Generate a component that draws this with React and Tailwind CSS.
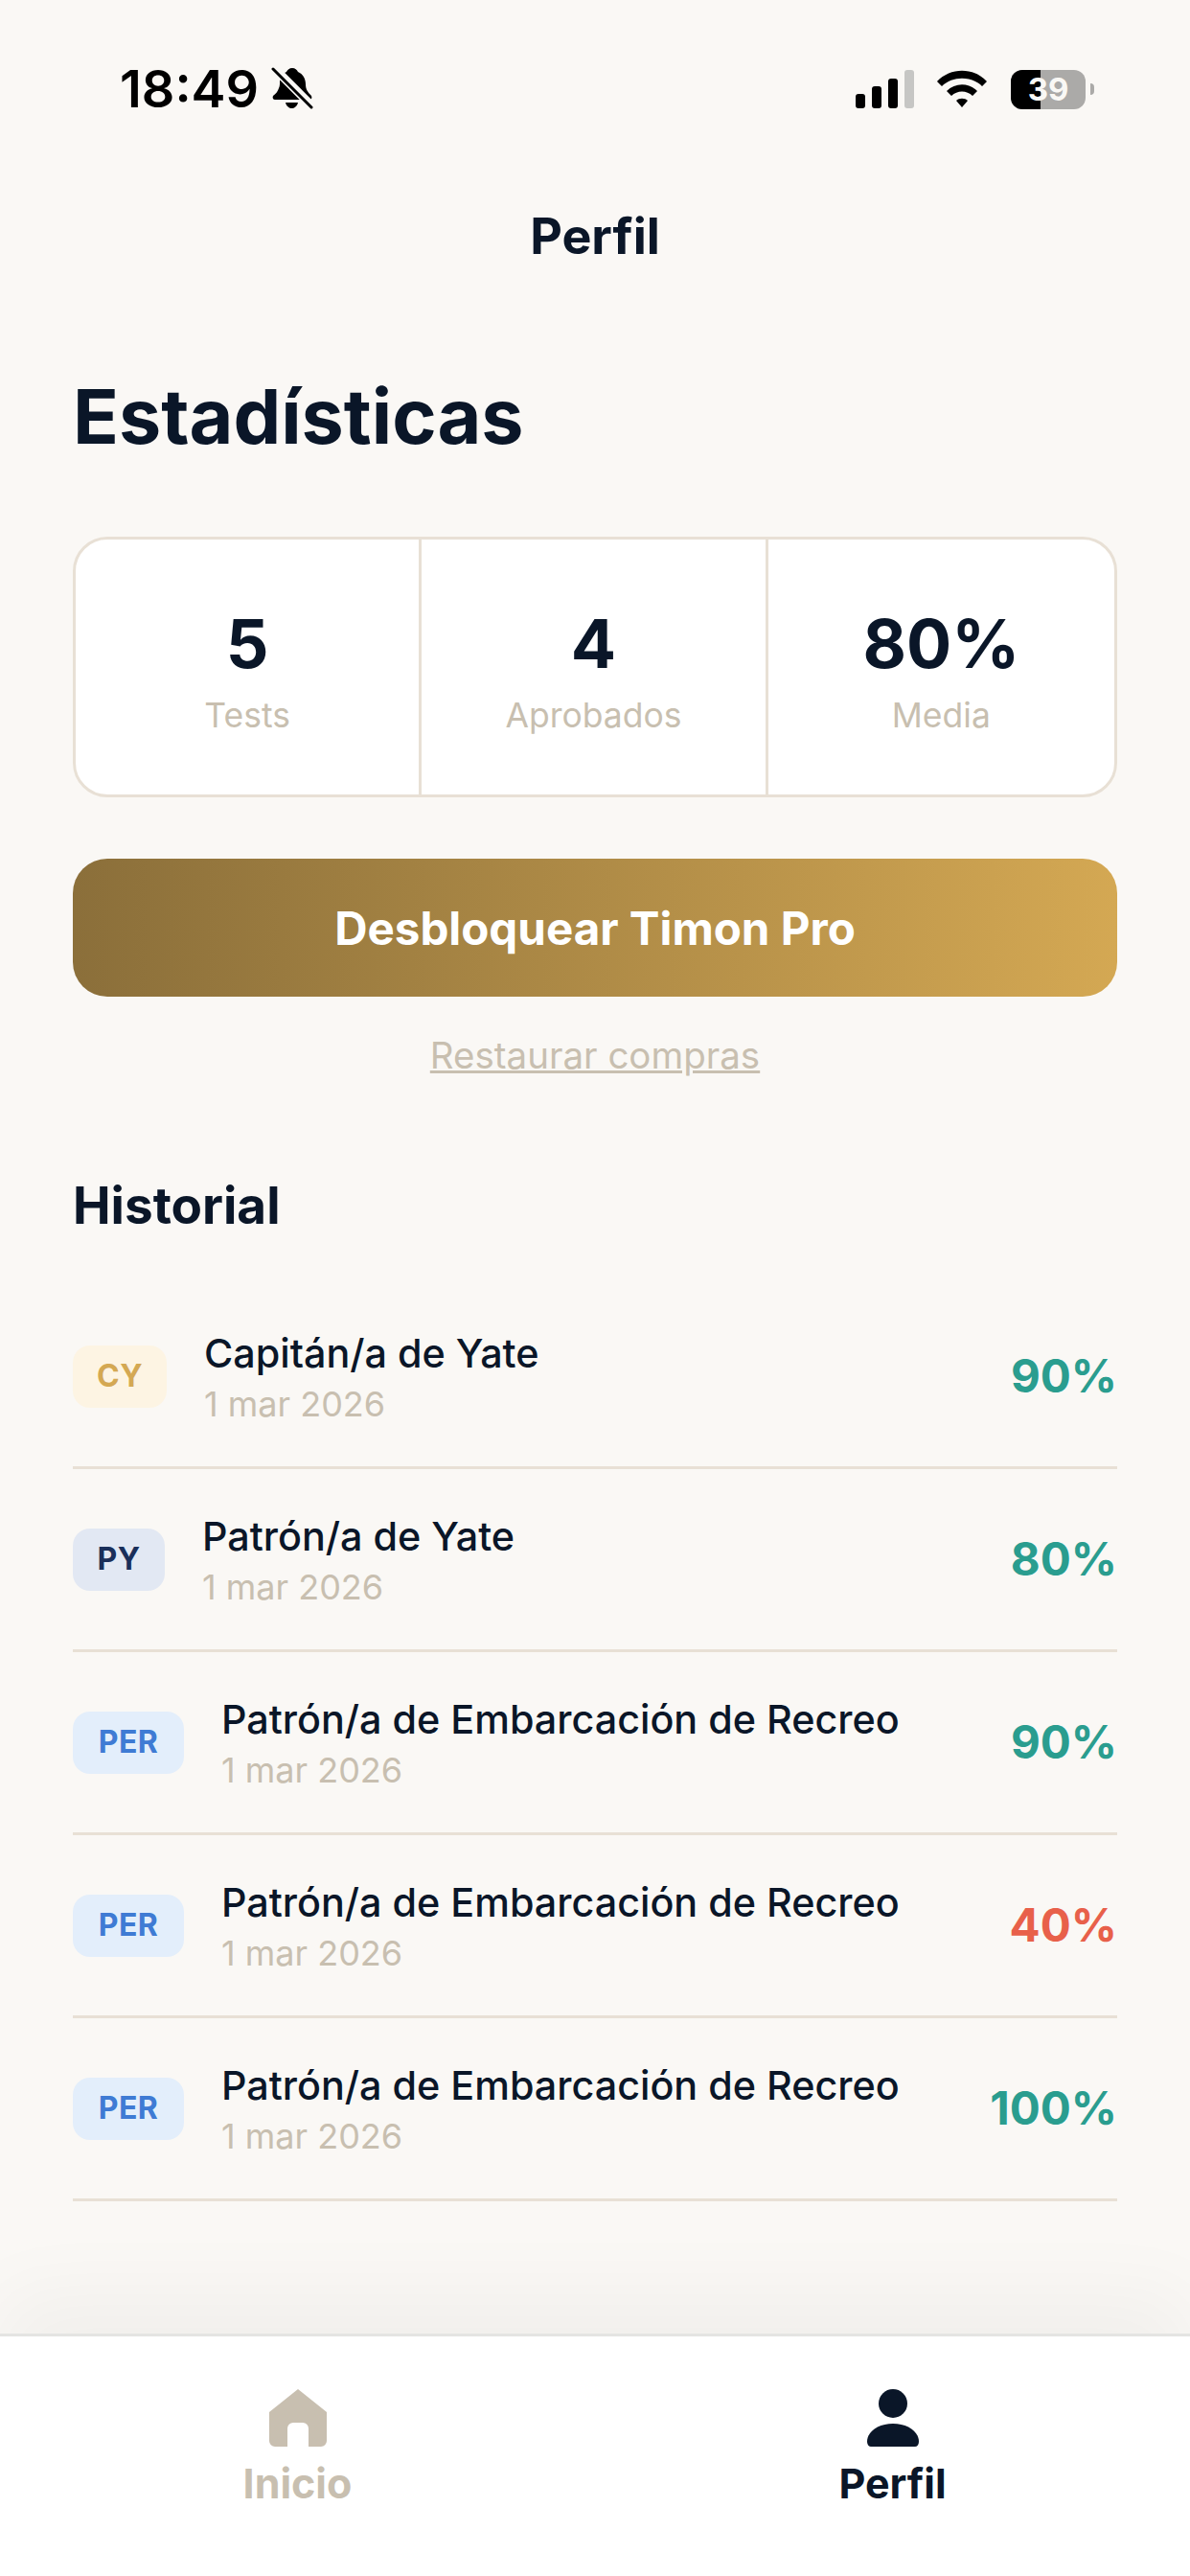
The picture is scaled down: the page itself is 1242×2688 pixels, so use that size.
import React from "react";

const history = [
  { code: "CY", title: "Capitán/a de Yate", score: "90%", badge: "bg-[#fdf4e3] text-[#d4a853]", w: "w-[98px]" },
  { code: "PY", title: "Patrón/a de Yate", score: "80%", badge: "bg-[#e2e8f3] text-[#1a2f5a]", w: "w-[96px]" },
  { code: "PER", title: "Patrón/a de Embarcación de Recreo", score: "90%", badge: "bg-[#e3eefb] text-[#3f7bd4]", w: "w-[116px]" },
  { code: "PER", title: "Patrón/a de Embarcación de Recreo", score: "40%", badge: "bg-[#e3eefb] text-[#3f7bd4]", w: "w-[116px]", bad: true },
  { code: "PER", title: "Patrón/a de Embarcación de Recreo", score: "100%", badge: "bg-[#e3eefb] text-[#3f7bd4]", w: "w-[116px]" },
];

const stats = [
  { value: "5", label: "Tests" },
  { value: "4", label: "Aprobados" },
  { value: "80%", label: "Media" },
];

const StatusBar = () => (
  <div className="flex items-center justify-between h-[92px] mt-[47px] pl-[125px] pr-[100px]">
    <div className="flex items-center gap-[13px]">
      <span className="text-[54px] leading-none font-semibold text-black">18:49</span>
      <svg width="44" height="44" viewBox="0 0 44 44" className="-mt-[2px]">
        <path d="M22 1c3 0 5 2 6 4 5 2 8 7 8 13 0 5 2 8 6 12 1 2 0 4-2 4H4c-2 0-3-2-2-4 3-2 5-5 6-8 1-2 1-4 1-6 0-5 3-9 7-11 1-2 3-4 6-4z" fill="#000" />
        <path d="M15 37h13c-1 4-4 6-6.500 6S16 41 15 37z" fill="#000" />
        <path d="M2 0l40 40" stroke="#f9f8f5" strokeWidth="9" />
        <path d="M2 2l40 40" stroke="#000" strokeWidth="3" strokeLinecap="round" />
      </svg>
    </div>
    <div className="flex items-center">
      <svg width="62" height="40" viewBox="0 0 62 40">
        <rect x="1" y="25" width="10" height="15" rx="3" fill="#000" />
        <rect x="18" y="17" width="10" height="23" rx="3" fill="#000" />
        <rect x="35" y="9" width="10" height="31" rx="3" fill="#000" />
        <rect x="52" y="0" width="10" height="40" rx="3" fill="#c6c6c4" />
      </svg>
      <svg width="54" height="40" viewBox="0 0 54 40" className="ml-[23px]">
        <path d="M1 12C15-3 39-3 53 12l-5 5C37 6 17 6 6 17z" fill="#000" />
        <path d="M11 22c9-9 23-9 32 0l-5 5c-6-6-16-6-22 0z" fill="#000" />
        <path d="M21 32c3-3 9-3 12 0l-6 7z" fill="#000" />
      </svg>
      <div className="relative ml-[24px] flex h-[41px] w-[78px] overflow-hidden rounded-[12px] bg-[#abaaa8]">
        <div className="h-full w-[31px] bg-black" />
        <span className="absolute inset-0 flex items-center justify-center text-[33px] leading-none font-bold text-[#f9f8f5]">39</span>
      </div>
      <div className="ml-[5px] h-[12px] w-[4px] rounded-r-full bg-[#abaaa8]" />
    </div>
  </div>
);

const Row = ({ item }) => (
  <div className="flex items-center justify-between h-[191px] border-b-[3px] border-[#e8e0d5]">
    <div className="flex items-center gap-[39px]">
      <div className={`flex h-[65px] ${item.w} items-center justify-center rounded-[18px] text-[32px] font-bold tracking-[0.5px] ${item.badge}`}>
        {item.code}
      </div>
      <div className="flex flex-col pt-[5px]">
        <span className="text-[41.3px] leading-[52px] font-medium text-[#0a1628]">{item.title}</span>
        <span className="text-[36px] leading-[54px] text-[#c8bfb0]">1 mar 2026</span>
      </div>
    </div>
    <span className={`text-[47.5px] font-bold ${item.bad ? "text-[#e8604a]" : "text-[#2a9d8f]"}`}>{item.score}</span>
  </div>
);

const App = () => {
  return (
    <div className="flex h-[2688px] w-[1242px] flex-col overflow-hidden bg-[#faf8f5] font-['Inter',sans-serif] text-[#0a1628]">
      <StatusBar />
      <div className="mt-[77px] text-center text-[52px] leading-[62px] font-bold">Perfil</div>

      <main className="flex-1 px-[76px]">
        <h1 className="mt-[107px] text-[79px] leading-[98px] font-bold">Estadísticas</h1>

        <div className="mt-[77px] grid h-[272px] grid-cols-3 divide-x-[3px] divide-[#e8e0d5] overflow-hidden rounded-[36px] border-[3px] border-[#e8e0d5] bg-white">
          {stats.map((s) => (
            <div key={s.label} className="flex flex-col items-center justify-center pt-[8px]">
              <span className="text-[70px] leading-[84px] font-bold">{s.value}</span>
              <span className="mt-[10px] text-[35.5px] leading-[46px] text-[#c8bfb0]">{s.label}</span>
            </div>
          ))}
        </div>

        <button className="mt-[64px] flex h-[144px] w-full items-center justify-center rounded-[36px] bg-gradient-to-r from-[#8b6f3a] to-[#d4a853] pt-[2px] text-[47.5px] font-bold text-white">
          Desbloquear Timon Pro
        </button>

        <div className="mt-[38px] text-center text-[38.5px] leading-[46px] text-[#c8bfb0] underline">Restaurar compras</div>

        <h2 className="mt-[102px] text-[53px] leading-[64px] font-bold">Historial</h2>

        <div className="mt-[52px]">
          {history.map((item, i) => (
            <Row key={i} item={item} />
          ))}
        </div>
      </main>

      <nav className="grid h-[253px] grid-cols-2 border-t-[3px] border-[#e4e4e2] bg-white shadow-[0_-40px_80px_rgba(0,0,0,0.04)]">
        <div className="flex flex-col items-center pt-[55px]">
          <svg width="60" height="60" viewBox="0 0 60 60">
            <path d="M30 0L60 24V54a6 6 0 0 1-6 6H41V41a6 6 0 0 0-6-6H25a6 6 0 0 0-6 6V60H6a6 6 0 0 1-6-6V24z" fill="#c8bfb0" />
          </svg>
          <span className="mt-[12px] text-[43px] leading-[52px] font-bold text-[#c8bfb0]">Inicio</span>
        </div>
        <div className="flex flex-col items-center pt-[55px]">
          <svg width="54" height="60" viewBox="0 0 54 60">
            <circle cx="27" cy="15" r="15" fill="#0a1628" />
            <path d="M0 55C0 44 12 36 27 36s27 8 27 19c0 3-2 5-4 5H4c-2 0-4-2-4-5z" fill="#0a1628" />
          </svg>
          <span className="mt-[12px] text-[43px] leading-[52px] font-bold">Perfil</span>
        </div>
      </nav>
    </div>
  );
};

export default App;
